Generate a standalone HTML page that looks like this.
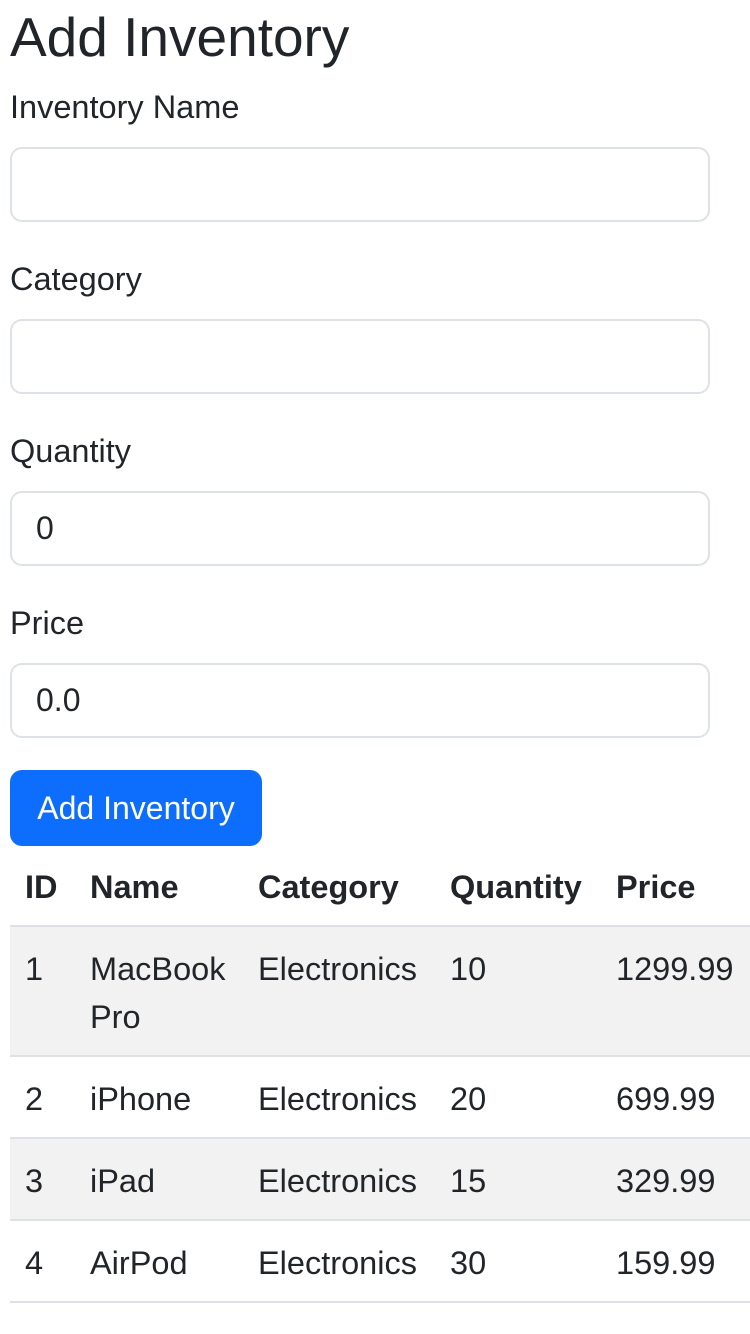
<!DOCTYPE html>
<html><head><meta charset="utf-8"><style>
body{margin:0;width:750px;height:1334px;background:#fff;font-family:"Liberation Sans",sans-serif;color:#212529;position:relative;overflow:hidden}
.a{position:absolute;white-space:nowrap}
h1{position:absolute;left:10px;top:4px;margin:0;font-size:55px;font-weight:500;line-height:66px}
.lbl{font-size:32.5px;line-height:40px}
.inp{position:absolute;left:10px;height:71px;border:2px solid #dee2e6;border-radius:12px;font-size:32px;line-height:71px;padding-left:24px;box-sizing:content-box}
.btn{position:absolute;left:10px;top:770px;width:252px;height:76px;background:#0d6efd;border-radius:12px;color:#fff;font-size:32px;line-height:76px;text-align:center}
.row{position:absolute;left:10px;width:740px;border-bottom:2px solid #dee2e6}
.t{font-size:32.5px;line-height:48px}
.b{font-weight:bold}
</style></head><body>
<h1>Add Inventory</h1>
<div class="a lbl" style="left:10px;top:87px">Inventory Name</div>
<div class="inp" style="top:147px;width:672px"></div>
<div class="a lbl" style="left:10px;top:259px">Category</div>
<div class="inp" style="top:319px;width:672px"></div>
<div class="a lbl" style="left:10px;top:431px">Quantity</div>
<div class="inp" style="top:491px;width:672px">0</div>
<div class="a lbl" style="left:10px;top:603px">Price</div>
<div class="inp" style="top:663px;width:672px">0.0</div>
<div class="btn">Add Inventory</div>

<div class="row" style="top:846px;height:79px"></div>
<div class="row" style="height:128px;background:#f2f2f2;border-top:2px solid #dee2e6;top:925px"></div>
<div class="row" style="top:1057px;height:80px"></div>
<div class="row" style="top:1139px;height:80px;background:#f2f2f2"></div>
<div class="row" style="top:1221px;height:80px"></div>

<div class="a t b" style="left:25px;top:863px">ID</div>
<div class="a t b" style="left:90px;top:863px">Name</div>
<div class="a t b" style="left:258px;top:863px">Category</div>
<div class="a t b" style="left:450px;top:863px">Quantity</div>
<div class="a t b" style="left:616px;top:863px">Price</div>

<div class="a t" style="left:25px;top:945px">1</div>
<div class="a t" style="left:90px;top:945px">MacBook<br>Pro</div>
<div class="a t" style="left:258px;top:945px">Electronics</div>
<div class="a t" style="left:450px;top:945px">10</div>
<div class="a t" style="left:616px;top:945px">1299.99</div>

<div class="a t" style="left:25px;top:1075px">2</div>
<div class="a t" style="left:90px;top:1075px">iPhone</div>
<div class="a t" style="left:258px;top:1075px">Electronics</div>
<div class="a t" style="left:450px;top:1075px">20</div>
<div class="a t" style="left:616px;top:1075px">699.99</div>

<div class="a t" style="left:25px;top:1157px">3</div>
<div class="a t" style="left:90px;top:1157px">iPad</div>
<div class="a t" style="left:258px;top:1157px">Electronics</div>
<div class="a t" style="left:450px;top:1157px">15</div>
<div class="a t" style="left:616px;top:1157px">329.99</div>

<div class="a t" style="left:25px;top:1239px">4</div>
<div class="a t" style="left:90px;top:1239px">AirPod</div>
<div class="a t" style="left:258px;top:1239px">Electronics</div>
<div class="a t" style="left:450px;top:1239px">30</div>
<div class="a t" style="left:616px;top:1239px">159.99</div>
</body></html>
